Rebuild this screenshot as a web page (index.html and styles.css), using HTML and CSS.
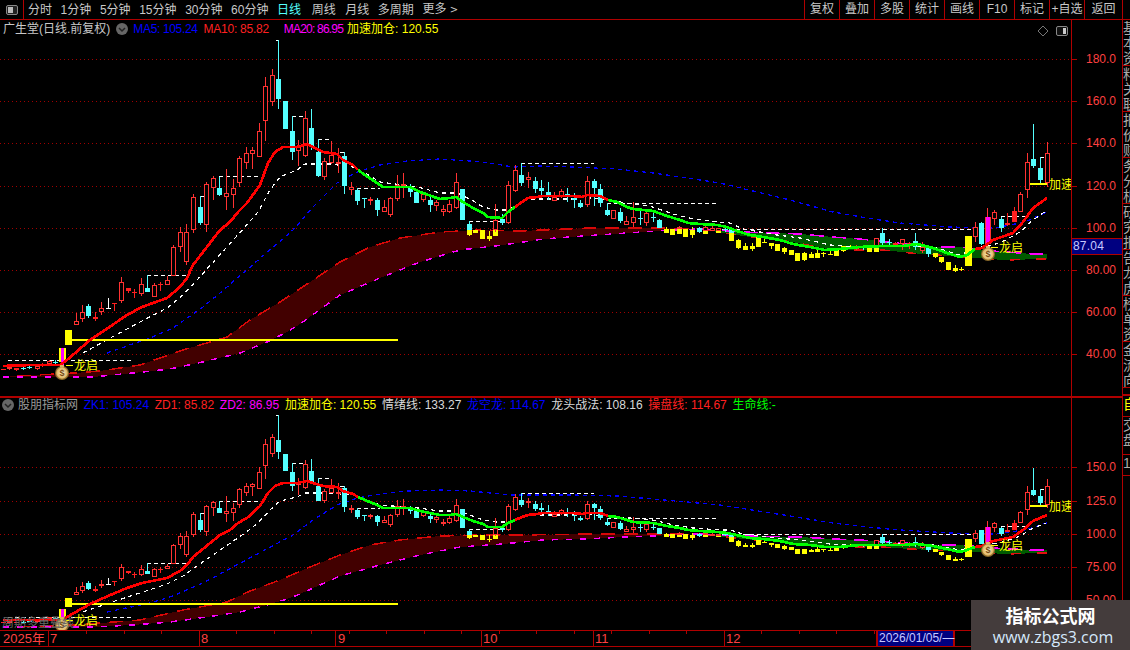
FILE: index.html
```html
<!DOCTYPE html>
<html lang="zh-CN">
<head>
<meta charset="utf-8">
<title>广生堂 日线</title>
<link rel="stylesheet" href="styles.css">
</head>
<body>
<div class="app">
  <header class="toolbar">
    <div class="layout-btn">
      <svg class="layout-icon" viewBox="0 0 12 10"><rect x="0.5" y="0.5" width="11" height="9" rx="1.5" fill="#222" stroke="#888"/><rect x="2" y="2" width="5" height="6" fill="#bbb"/></svg>
    </div>
    <nav class="periods">
      <span>分时</span><span>1分钟</span><span>5分钟</span><span>15分钟</span><span>30分钟</span><span>60分钟</span><span class="active">日线</span><span class="wide">周线</span><span>月线</span><span>多周期</span><span>更多 <b class="more">&gt;</b></span>
    </nav>
    <nav class="actions">
      <span>复权</span><span>叠加</span><span>多股</span><span>统计</span><span>画线</span><span>F10</span><span>标记</span><span>+自选</span><span>返回</span>
    </nav>
    <div class="corner"></div>
  </header>

  <main class="main">
    <div class="panels">
      <section class="panel panel-top">
        <div class="plot">
          <svg id="chart-top" class="chart" viewBox="0 20 1071 376"></svg>
          <div class="legend">
            <span class="name">广生堂(日线.前复权)</span>
            <svg class="chev" viewBox="0 0 12 12"><circle cx="6" cy="6" r="6" fill="#666"/><path d="M3 5l3 3 3-3" fill="none" stroke="#222" stroke-width="1.5"/></svg>
            <span class="blue m1">MA5: 105.24</span>
            <span class="red m2">MA10: 85.82</span>
            <span class="mag m3">MA20: 86.95</span>
            <span class="yel m4">加速加仓: 120.55</span>
          </div>
          <div class="plot-tools">
            <svg class="diamond" viewBox="0 0 12 12"><path d="M6 1l5 5-5 5-5-5z" fill="none" stroke="#777"/></svg>
            <svg class="toggle" viewBox="0 0 12 10"><rect x="0.5" y="0.5" width="11" height="9" rx="1.5" fill="#111" stroke="#888"/><rect x="7" y="2" width="3" height="6" fill="#ccc"/></svg>
          </div>
        </div>
        <div class="axis" id="axis-top"><div class="last-price">87.04</div></div>
      </section>
      <section class="panel panel-bottom">
        <div class="plot">
          <svg id="chart-bottom" class="chart" viewBox="0 398 1071 232"></svg>
          <div class="legend legend-low">
            <svg class="chev" viewBox="0 0 12 12"><circle cx="6" cy="6" r="6" fill="#666"/><path d="M3 5l3 3 3-3" fill="none" stroke="#222" stroke-width="1.5"/></svg>
            <span class="gray">股朋指标网</span>
            <span class="blue g">ZK1: 105.24</span>
            <span class="red g">ZD1: 85.82</span>
            <span class="mag g">ZD2: 86.95</span>
            <span class="yel g">加速加仓: 120.55</span>
            <span class="white g">情绪线: 133.27</span>
            <span class="blue g">龙空龙: 114.67</span>
            <span class="white g">龙头战法: 108.16</span>
            <span class="red g">操盘线: 114.67</span>
            <span class="green g">生命线:-</span>
          </div>
          <div class="ghost">周期多重叠线</div>
        </div>
        <div class="axis" id="axis-bottom"></div>
      </section>
      <div class="timeline" id="timeline"></div>
      <div class="tabs">
        <span class="t42">公式</span><span class="t36">指标</span><span class="t38">主图</span><span class="t30">副图</span><span class="t32">选股</span><span class="t29">预警</span><span class="t35">模板</span><span class="t37">分析</span><span class="t528"></span><span class="t33">筹码</span><span class="t30 cy">资金</span>
      </div>
    </div>
    <aside class="sidebar">
      <div class="side-tab">基本资</div><div class="side-tab">料关联</div><div class="side-tab">报价财</div><div class="side-tab">务分析</div><div class="side-tab">研究报</div><div class="side-tab">告龙虎</div><div class="side-tab">榜单资</div><div class="side-tab">金流向</div>
      <div class="side-sep"></div>
      <div class="side-tab low"><b>自</b></div><div class="side-tab low">交盘</div><div class="side-tab low white">1</div>
    </aside>
  </main>

  <div class="watermark">
    <div class="wm-title">指标公式网</div>
    <div class="wm-url">www.zbgs3.com</div>
  </div>
</div>
<script src="chart.js"></script>
</body>
</html>
```

FILE: styles.css
```css
* { box-sizing: border-box; }
html, body { margin: 0; padding: 0; background: #000; }
body { font: 12px/14px "Liberation Sans", "Noto Sans CJK SC", sans-serif; color: #c8c8c8; }
.app { position: relative; width: 1130px; height: 650px; overflow: hidden; background: #000; display: flex; flex-direction: column; }

.toolbar { height: 20px; flex: none; display: flex; border-bottom: 1px solid #b00000; }
.layout-btn { width: 24px; border-right: 1px solid #b00000; display: flex; align-items: center; justify-content: center; }
.layout-icon { width: 12px; height: 10px; display: block; }
.periods { display: flex; align-items: center; gap: 8.6px; padding-left: 4px; flex: 1; white-space: nowrap; }
.periods .active { color: #54ffff; }
.periods .wide { margin: 0 1px 0 2px; }
.more { font-weight: normal; font-family: "DejaVu Sans", sans-serif; font-size: 10px; }
.actions { display: flex; }
.actions span { width: 35px; border-left: 1px solid #b00000; text-align: center; line-height: 18px; white-space: nowrap; }
.actions span:nth-child(9) { width: 38px; }
.corner { width: 8px; border-left: 1px solid #b00000; }

.main { height: 610px; flex: none; display: flex; }
.panels { width: 1122px; flex: none; display: flex; flex-direction: column; }
.panel { display: flex; flex: none; }
.panel-top { height: 378px; border-bottom: 2px solid #b00000; }
.panel-bottom { height: 232px; }
.plot { position: relative; width: 1071px; flex: none; overflow: hidden; }
.chart { display: block; width: 1071px; height: 100%; shape-rendering: crispEdges; }
.chart text { font: 12px "Liberation Sans", "Noto Sans CJK SC", sans-serif; fill: #ffff00; shape-rendering: auto; }
.chart .bag-d { font: bold 9px "Liberation Sans", sans-serif; fill: #7a4a10; }

.axis { position: relative; width: 51px; flex: none; border-left: 1px solid #b00000; }
.axis-label { position: absolute; left: 14px; color: #ff4040; line-height: 14px; }
.axis-tick { position: absolute; left: 0; width: 5px; height: 1px; background: #b00000; }
.last-price { position: absolute; left: 0; right: 0; top: 218px; height: 17px; background: #000080; border-top: 1px solid #b00000; border-bottom: 1px solid #b00000; color: #c8c8ff; line-height: 15px; padding-left: 1px; z-index: 1; letter-spacing: .2px; }

.legend { position: absolute; left: 3px; top: 2px; display: flex; align-items: center; white-space: nowrap; }
.legend-low { left: 2px; top: 0; }
.name { color: #c8c8c8; }
.chev { width: 12px; height: 12px; flex: none; margin-left: 6px; }
.legend-low .chev { margin-left: 0; }
.gray { color: #999; margin-left: 4px; }
.blue { color: #0000ff; }
.red { color: #ff2020; }
.mag { color: #ff00ff; }
.yel { color: #ffff00; }
.white { color: #d8d8d8; }
.green { color: #00ff00; }
.m1 { margin-left: 5px; letter-spacing: -.35px; }
.m2 { margin-left: 6px; letter-spacing: -.25px; }
.m3 { margin-left: 15px; letter-spacing: -.8px; }
.m4 { margin-left: 4px; }
.g { margin-left: 5.7px; }
.plot-tools { position: absolute; right: 3px; top: 5px; display: flex; align-items: center; gap: 7px; }
.diamond { width: 12px; height: 12px; display: block; }
.toggle { width: 12px; height: 10px; display: block; }
.ghost { position: absolute; left: 2px; bottom: 0; color: #666; }

.timeline { position: relative; height: 17px; border-top: 1px solid #b00000; border-bottom: 1px solid #b00000; flex: none; }
.tl-label { position: absolute; top: 1px; color: #ff4040; line-height: 14px; font-size: 13px; }
.tl-sep { position: absolute; top: 0; bottom: 0; width: 1px; background: #b00000; }
.tl-tick { position: absolute; top: 0; width: 1px; height: 3px; background: #b00000; }
.tl-date { position: absolute; top: 0; bottom: 0; left: 877px; width: 77px; background: #000080; color: #c8c8ff; border-left: 1px solid #b00000; border-right: 1px solid #b00000; line-height: 15px; padding-left: 1px; white-space: nowrap; font-size: 12px; }

.tabs { height: 6px; display: flex; overflow: hidden; }
.tabs span { border-right: 1px solid #b00000; line-height: 14px; padding-left: 10px; color: #ddd; flex: none; white-space: nowrap; overflow: hidden; }
.t42 { width: 42px; } .t36 { width: 36px; } .t38 { width: 38px; } .t30 { width: 30px; } .t32 { width: 32px; } .t29 { width: 29px; } .t35 { width: 35px; } .t37 { width: 37px; } .t528 { width: 528px; } .t33 { width: 33px; }
.tabs .cy { color: #54ffff; }

.sidebar { width: 8px; flex: none; border-left: 1px solid #b00000; overflow: hidden; display: flex; flex-direction: column; font-size: 14px; line-height: 15px; }
.side-tab { width: 15px; border-bottom: 1px solid #b00000; color: #aaa; padding-top: 1px; word-break: break-all; flex: none; }
.side-tab { height: 46px; }
.side-sep { height: 8px; border-bottom: 2px solid #b00000; flex: none; }
.side-tab.low { height: 21px; }
.side-tab.low:nth-of-type(11) { height: 38px; }
.side-tab.low b { color: #ffff00; font-weight: normal; }

.watermark { position: absolute; right: 0; bottom: 0; width: 159px; height: 50px; background: #443c3c; text-align: center; }
.wm-title { font: bold 18px/24px "Noto Sans CJK SC", sans-serif; color: #fff; margin-top: 3px; }
.wm-url { font: 16px/20px "Open Sans", sans-serif; color: #d4e8fb; padding-left: 5px; }
```

FILE: chart.js
```js
// Candles: [x, bodyTop, bodyBottom, wickTop, wickBottom, kind]
// kind: h hollow red, r solid red, c cyan, y yellow, Y wide yellow, m magenta with red edge, M magenta, w white
var candles = [
[3,369,370,369,370,'r'],[9,367,369,366,370,'h'],[16,368,370,368,371,'r'],[23,368,369,367,370,'c'],[29,367,368,365,369,'c'],[37,366,369,365,370,'h'],[42,365,366,363,367,'r'],[49,361,364,360,365,'h'],[55,362,363,360,364,'c'],
[62,348,362,348,362,'Y'],[62,348,367,348,367,'M'],[68,330,345,330,345,'Y'],
[76,321,325,313,325,'h'],[82,312,319,305,322,'h'],[88,306,316,304,318,'c'],[95,317,319,312,321,'r'],[101,308,312,302,315,'h'],[108,308,309,298,309,'w'],[114,303,304,303,311,'r'],[121,282,301,277,303,'h'],[128,288,291,288,293,'r'],[134,292,293,289,298,'r'],[141,284,294,278,296,'h'],[147,288,292,275,292,'c'],[154,285,297,283,297,'h'],[160,284,285,282,291,'r'],[167,280,285,276,285,'h'],[173,247,276,245,276,'h'],[180,232,247,227,252,'h'],[186,232,262,224,265,'h'],
[193,197,230,194,233,'h'],[200,207,223,196,225,'c'],[206,184,225,182,232,'h'],[213,178,188,176,200,'h'],[219,188,195,177,196,'c'],[226,193,197,169,210,'h'],[233,188,195,179,208,'h'],[239,158,183,156,187,'h'],[246,153,163,147,169,'h'],[252,150,154,147,169,'h'],[259,131,157,123,157,'h'],[265,86,121,77,141,'h'],[272,75,102,69,106,'h'],[278,79,99,40,109,'c'],[285,101,129,101,129,'c'],[292,131,152,116,160,'c'],[298,147,151,140,166,'h'],[305,118,156,111,157,'h'],[311,128,147,109,150,'c'],[318,152,176,139,177,'c'],[324,161,177,158,180,'h'],[331,155,163,141,164,'h'],[338,162,164,148,173,'h'],[344,156,186,152,194,'c'],[351,187,190,182,195,'h'],[357,190,201,188,205,'c'],[364,198,199,198,208,'c'],[370,199,201,197,205,'h'],[377,200,210,198,216,'c'],[384,207,212,200,212,'h'],[390,198,215,197,217,'h'],[397,185,199,175,201,'h'],[403,184,186,173,198,'h'],[410,188,192,184,197,'c'],[416,192,203,192,203,'c'],[423,194,200,192,202,'h'],[430,200,205,196,212,'c'],[436,202,206,200,211,'h'],
[443,209,212,205,216,'h'],[449,204,212,200,213,'h'],[456,182,208,173,209,'h'],[462,189,220,189,220,'c'],[469,230,235,230,236,'y'],[469,224,230,221,230,'c'],[475,230,233,230,233,'y'],[482,230,239,230,239,'y'],[489,236,239,231,241,'y'],[495,230,236,230,236,'y'],[495,220,230,204,232,'h'],[502,219,223,214,225,'c'],[508,185,223,181,224,'h'],[515,170,191,165,192,'h'],[521,175,183,163,186,'c'],[528,177,180,172,188,'h'],[535,181,189,177,193,'c'],[541,188,191,180,195,'c'],[548,192,195,182,200,'c'],[554,197,201,192,201,'h'],[561,191,196,189,198,'h'],[567,194,195,188,202,'c'],[574,198,200,193,208,'c'],[580,203,207,200,208,'c'],[587,181,205,176,207,'h'],[594,181,188,179,206,'c'],[600,189,203,184,207,'c'],[607,210,215,203,216,'c'],[613,210,219,210,219,'h'],[620,212,221,208,223,'c'],[626,221,225,216,225,'h'],[633,217,223,202,227,'h'],[640,218,219,210,225,'c'],[646,213,223,209,226,'h'],[653,217,218,213,222,'c'],[659,220,228,219,228,'c'],[666,229,233,227,233,'y'],[672,229,235,229,235,'y'],[679,229,234,229,234,'y'],[679,227,229,226,229,'h'],[685,229,237,229,237,'y'],[692,230,235,227,238,'y'],[699,228,232,227,233,'c'],
[705,231,234,231,234,'y'],[705,227,231,226,231,'h'],[712,228,231,226,231,'h'],[718,231,233,231,233,'y'],[718,228,231,228,231,'h'],[725,229,230,228,232,'c'],[731,233,241,233,241,'y'],[731,229,233,229,233,'c'],[738,240,248,239,249,'y'],[745,246,250,243,250,'y'],[752,246,249,243,251,'y'],[758,237,247,237,247,'y'],[764,242,243,237,243,'y'],[771,243,246,243,249,'y'],[777,244,251,244,251,'y'],[784,248,252,247,254,'y'],[791,250,255,250,255,'y'],[797,253,261,253,261,'y'],[804,253,260,252,261,'y'],[811,254,258,252,258,'y'],[817,253,258,250,258,'y'],[823,253,254,252,257,'y'],[830,254,255,251,255,'y'],[836,250,256,250,256,'y'],[843,246,251,246,252,'y'],[850,247,248,245,249,'y'],[856,247,249,245,250,'h'],[863,247,248,245,250,'c'],[869,248,252,248,252,'y'],[876,248,252,248,252,'y'],[876,238,247,238,247,'h'],[882,233,243,228,245,'c'],[889,242,243,239,245,'c'],[895,243,245,242,247,'r'],[902,239,244,239,250,'h'],[909,243,245,242,249,'h'],[915,241,247,233,250,'c'],[922,247,251,242,253,'h'],[928,248,254,247,257,'c'],[935,253,257,253,258,'y'],[941,257,262,257,263,'y'],[948,262,270,262,270,'y'],[955,268,271,265,272,'y'],[961,269,270,267,271,'y'],
[968,236,266,236,266,'Y'],[975,227,237,222,242,'h'],[981,223,244,222,245,'c'],[987,217,244,208,245,'m'],[994,212,219,210,225,'h'],[1001,219,228,217,232,'c'],[1007,223,225,213,226,'r'],[1014,211,222,207,222,'r'],[1020,194,212,192,212,'h'],[1027,162,190,153,198,'h'],[1033,159,166,124,168,'c'],[1040,168,180,157,183,'c'],[1047,153,183,142,187,'h']
];

var red1 = [[3,366],[30,365],[60,365],[67,360],[90,340],[108,328],[127,315],[142,307],[167,298],[180,287],[187,278],[193,265],[220,230],[230,222],[238,212],[247,203],[260,185],[268,163],[275,152],[283,147],[297,147],[307,144],[313,147],[323,152],[337,154],[343,160],[353,165],[358,170]];
var green1 = [[358,170],[365,175],[377,183],[383,187],[410,187],[420,192],[440,199],[450,198],[456,197],[463,202],[473,208],[483,213],[488,217],[502,218],[508,212],[515,207]];
var red2 = [[515,207],[522,202],[528,198],[537,197],[543,196],[573,196],[582,197],[587,195],[600,196],[608,200]];
var green2 = [[608,200],[617,202],[627,207],[633,209],[653,211],[667,216],[680,220],[688,223],[700,224],[717,225],[727,227],[737,231],[750,235],[763,237],[780,240],[793,244],[810,247],[825,250],[840,249],[860,247],[883,246],[903,246],[917,244],[933,248],[947,253],[960,257],[967,255],[975,249]];
var red3 = [[975,249],[982,248],[993,240],[1013,233],[1023,222],[1033,208],[1047,198]];
var whiteLine = [[83,353],[112,337],[140,322],[167,308],[183,295],[197,280],[245,227],[258,212],[270,190],[280,177],[297,170],[305,164],[330,164],[353,167],[365,173],[380,182],[418,187],[440,193],[457,193],[470,199],[483,207],[497,210],[507,210],[517,205],[527,199],[540,199],[573,199],[583,197],[607,200],[653,207],[673,214],[693,219],[720,222],[730,223],[743,229],[777,235],[800,238],[830,245],[857,247],[900,245],[933,247],[960,255],[977,248],[1000,243],[1020,232],[1033,220],[1046,211]];
var blueLine = [[107,353],[150,338],[173,328],[203,307],[220,293],[293,230],[313,207],[337,183],[357,172],[380,165],[407,161],[440,159],[470,161],[490,163],[513,167],[540,166],[570,167],[617,169],[653,173],[687,178],[720,183],[790,200],[833,212],[867,218],[900,223],[950,227],[995,228],[1025,222],[1047,212]];
var upper = [[17,376],[75,373],[100,371],[140,365],[183,350],[227,337],[250,320],[280,302],[310,282],[340,262],[370,247],[400,238],[440,232],[480,230],[520,231],[590,228],[653,228],[700,229]];
var lowerAfter = [[700,229],[743,236],[787,241],[833,250],[883,250],[910,253],[977,258],[1003,260],[1047,259]];
var mag = [[3,377],[93,377],[133,373],[170,369],[207,361],[240,353],[267,342],[287,332],[300,324],[340,295],[380,278],[420,262],[460,250],[503,245],[543,239],[583,236],[627,233],[673,230],[700,229]];
var magAfter = [[700,229],[743,232],[800,234],[833,237],[860,239],[933,247],[960,247],[993,251],[1033,254],[1047,254]];
var dashes = [[8,132,360],[147,187,275],[219,260,176],[276,278,40],[292,304,116],[318,331,139],[340,344,152],[357,380,188],[469,502,221],[521,594,163],[607,718,203],[722,973,229],[1001,1027,216],[1040,1044,157],[201,204,196]];

var colors = { h:'#ff3232', r:'#ff2020', c:'#54ffff', y:'#ffff00', Y:'#ffff00', m:'#ff00ff', M:'#ff00ff', w:'#ffffff' };

function same(y) { return y; }
function low(y) { return Math.round(0.629 * y + 390.1); }

function poly(points, map, attrs) {
  var p = points.map(function (q) { return q[0] + ',' + map(q[1]); }).join(' ');
  return '<polyline points="' + p + '" fill="none" ' + attrs + '/>';
}
function fillBand(a, b, map, color) {
  var pts = a.concat(b.slice().reverse()).map(function (q) { return q[0] + ',' + map(q[1]); }).join(' ');
  return '<polygon points="' + pts + '" fill="' + color + '"/>';
}
function candleSvg(c, map) {
  var x = c[0], k = c[5], col = colors[k], s = '';
  var top = map(c[1]), bot = map(c[2]), wt = map(c[3]), wb = map(c[4]);
  var w = k === 'Y' ? 7 : (k === 'M' ? 3 : 5);
  var h = Math.max(bot - top, 1);
  s += '<rect x="' + x + '" y="' + wt + '" width="1" height="' + Math.max(wb - wt, 1) + '" fill="' + (k === 'm' ? '#ff3232' : col) + '"/>';
  if (k === 'h') {
    s += '<rect x="' + (x - 2) + '.5" y="' + top + '.5" width="4" height="' + Math.max(h - 1, 1) + '" fill="#000" stroke="' + col + '"/>';
  } else if (k === 'm') {
    s += '<rect x="' + (x - 2) + '" y="' + top + '" width="6" height="' + h + '" fill="#ff3232"/>';
    s += '<rect x="' + (x - 1) + '" y="' + top + '" width="4" height="' + h + '" fill="' + col + '"/>';
  } else {
    s += '<rect x="' + (x - Math.floor(w / 2)) + '" y="' + top + '" width="' + w + '" height="' + h + '" fill="' + col + '"/>';
  }
  return s;
}
function bag(x, y) {
  return '<g shape-rendering="auto"><circle cx="' + x + '" cy="' + y + '" r="7" fill="#8a6a2a"/>' +
    '<circle cx="' + x + '" cy="' + y + '" r="5.8" fill="url(#bagfill)"/>' +
    '<rect x="' + (x - 2) + '" y="' + (y - 8) + '" width="4" height="2.5" fill="#d8b060"/>' +
    '<text class="bag-d" x="' + x + '" y="' + (y + 3) + '" text-anchor="middle">$</text></g>';
}

function drawPanel(id, map, grid) {
  var s = '<defs><radialGradient id="bagfill"><stop offset="0" stop-color="#fff8d0"/><stop offset="1" stop-color="#dcae58"/></radialGradient></defs>';
  grid.forEach(function (g) {
    s += '<line x1="0" x2="1071" y1="' + g + '.5" y2="' + g + '.5" stroke="#a00000" stroke-dasharray="1 3"/>';
  });
  s += fillBand(upper, mag, map, '#420000');
  s += fillBand(magAfter, lowerAfter, map, '#005a00');
  s += poly(upper, map, 'stroke="#d80808" stroke-width="1.5" stroke-dasharray="14 9"');
  s += poly(lowerAfter, map, 'stroke="#e01010" stroke-width="1.5" stroke-dasharray="10 16"');
  s += poly(mag, map, 'stroke="#ff00ff" stroke-width="1.5" stroke-dasharray="6 8"');
  s += poly(magAfter, map, 'stroke="#ff00ff" stroke-width="1.5" stroke-dasharray="14 8"');
  s += poly(blueLine, map, 'stroke="#0000ff" stroke-width="1.3" stroke-dasharray="4 4"');
  dashes.forEach(function (d) {
    s += '<line x1="' + d[0] + '" x2="' + d[1] + '" y1="' + map(d[2]) + '.5" y2="' + map(d[2]) + '.5" stroke="#fff" stroke-dasharray="4 3"/>';
  });
  s += poly(whiteLine, map, 'stroke="#fff" stroke-width="1.2" stroke-dasharray="4 4"');
  s += '<rect x="65" y="' + map(339) + '" width="333" height="2" fill="#ffff00"/>';
  s += '<rect x="1027" y="' + map(183) + '" width="20" height="2" fill="#ffff00"/>';
  candles.forEach(function (c) { s += candleSvg(c, map); });
  var w = 'stroke-width="2.7" stroke-linejoin="round"';
  s += poly(red1, map, 'stroke="#ff0000" ' + w);
  s += poly(red2, map, 'stroke="#ff0000" ' + w);
  s += poly(red3, map, 'stroke="#ff0000" ' + w);
  s += poly(green1, map, 'stroke="#00ff00" ' + w);
  s += poly(green2, map, 'stroke="#00ff00" ' + w);
  s += bag(62, map(373)) + bag(988, map(254));
  s += '<rect x="66" y="' + map(365) + '" width="7" height="1" fill="#ffff00"/>';
  s += '<rect x="991" y="' + map(247) + '" width="7" height="1" fill="#ffff00"/>';
  s += '<text x="74" y="' + (map(365) + 5) + '">龙启</text>';
  s += '<text x="999" y="' + (map(247) + 5) + '">龙启</text>';
  s += '<text x="1049" y="' + (map(184) + 5) + '">加速</text>';
  document.getElementById(id).innerHTML = s;
}

drawPanel('chart-top', same, [59, 101, 143, 186, 228, 270, 312, 354]);
drawPanel('chart-bottom', low, [467, 501, 534, 567, 600]);

function drawAxis(id, rows, offset) {
  var axis = document.getElementById(id);
  rows.forEach(function (r) {
    var l = document.createElement('div');
    l.className = 'axis-label';
    l.textContent = r[0];
    l.style.top = (r[1] - offset - 7) + 'px';
    axis.appendChild(l);
    var t = document.createElement('div');
    t.className = 'axis-tick';
    t.style.top = (r[1] - offset) + 'px';
    axis.appendChild(t);
  });
}
drawAxis('axis-top', [['180.0',59],['160.0',101],['140.0',143],['120.0',186],['100.0',228],['80.00',270],['60.00',312],['40.00',354]], 20);
drawAxis('axis-bottom', [['150.0',467],['125.0',501],['100.0',534],['75.00',567],['50.00',600]], 398);

var tl = document.getElementById('timeline');
[['2025年',3],['7',50],['8',201],['9',338],['10',483],['11',595],['12',726]].forEach(function (m) {
  var l = document.createElement('div');
  l.className = 'tl-label';
  l.textContent = m[0];
  l.style.left = m[1] + 'px';
  tl.appendChild(l);
});
[48, 199, 335, 481, 593, 724, 876, 954, 1071].forEach(function (x) {
  var d = document.createElement('div');
  d.className = 'tl-sep';
  d.style.left = x + 'px';
  tl.appendChild(d);
});
for (var x = 86; x < 876; x += 37.5) {
  var t = document.createElement('div');
  t.className = 'tl-tick';
  t.style.left = Math.round(x) + 'px';
  tl.appendChild(t);
}
var date = document.createElement('div');
date.className = 'tl-date';
date.textContent = '2026/01/05/—';
tl.appendChild(date);
```
